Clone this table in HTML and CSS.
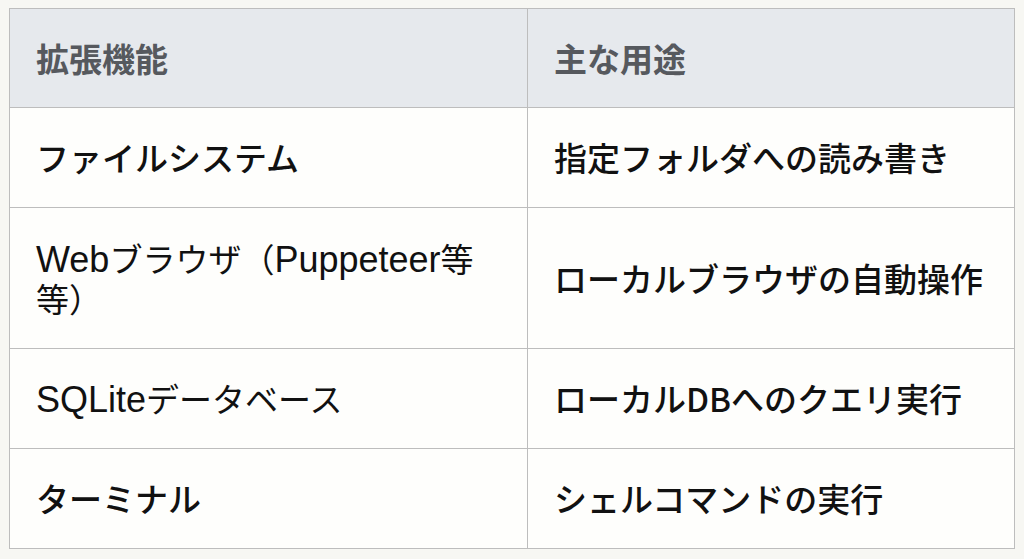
FILE: index.html
```html
<!DOCTYPE html>
<html lang="ja">
<head>
<meta charset="utf-8">
<link rel="stylesheet" href="styles.css">
</head>
<body>
<table class="grid">
  <thead>
    <tr><th class="c1">拡張機能</th><th class="c2">主な用途</th></tr>
  </thead>
  <tbody>
    <tr><td>ファイルシステム</td><td>指定フォルダへの読み書き</td></tr>
    <tr class="tall"><td class="reg"><span class="lat">Web</span>ブラウザ（<span class="lat">Puppeteer</span>等等）</td><td>ローカルブラウザの自動操作</td></tr>
    <tr><td class="reg"><span class="lat">SQLite</span>データベース</td><td>ローカルDBへのクエリ実行</td></tr>
    <tr><td>ターミナル</td><td>シェルコマンドの実行</td></tr>
  </tbody>
</table>
</body>
</html>
```

FILE: styles.css
```css
html, body {
  margin: 0;
  padding: 0;
  background: #f7f7f3;
}
body {
  padding: 8px 9px 0 9px;
  font-family: "Noto Sans CJK JP", sans-serif;
}
.grid {
  width: 1006px;
  border-collapse: collapse;
  background: #fefefc;
  table-layout: fixed;
}
.grid th, .grid td {
  border: 1px solid #bdbdbd;
  padding: 29px 26px 30px 26px;
  font-size: 33px;
  line-height: 40px;
  text-align: left;
  vertical-align: middle;
  color: #111;
  font-weight: 500;
}
.grid th {
  background: #e6e9ed;
  color: #56595e;
  font-weight: 700;
  padding-bottom: 29px;
}
.grid .c1 { width: 465px; }
.grid td.reg { font-weight: 400; }
.grid .lat {
  font-family: "Liberation Sans", Arial, sans-serif;
  font-size: 36px;
  line-height: 1;
}
.grid tr.tall td { padding-top: 30px; padding-bottom: 30px; }
```
